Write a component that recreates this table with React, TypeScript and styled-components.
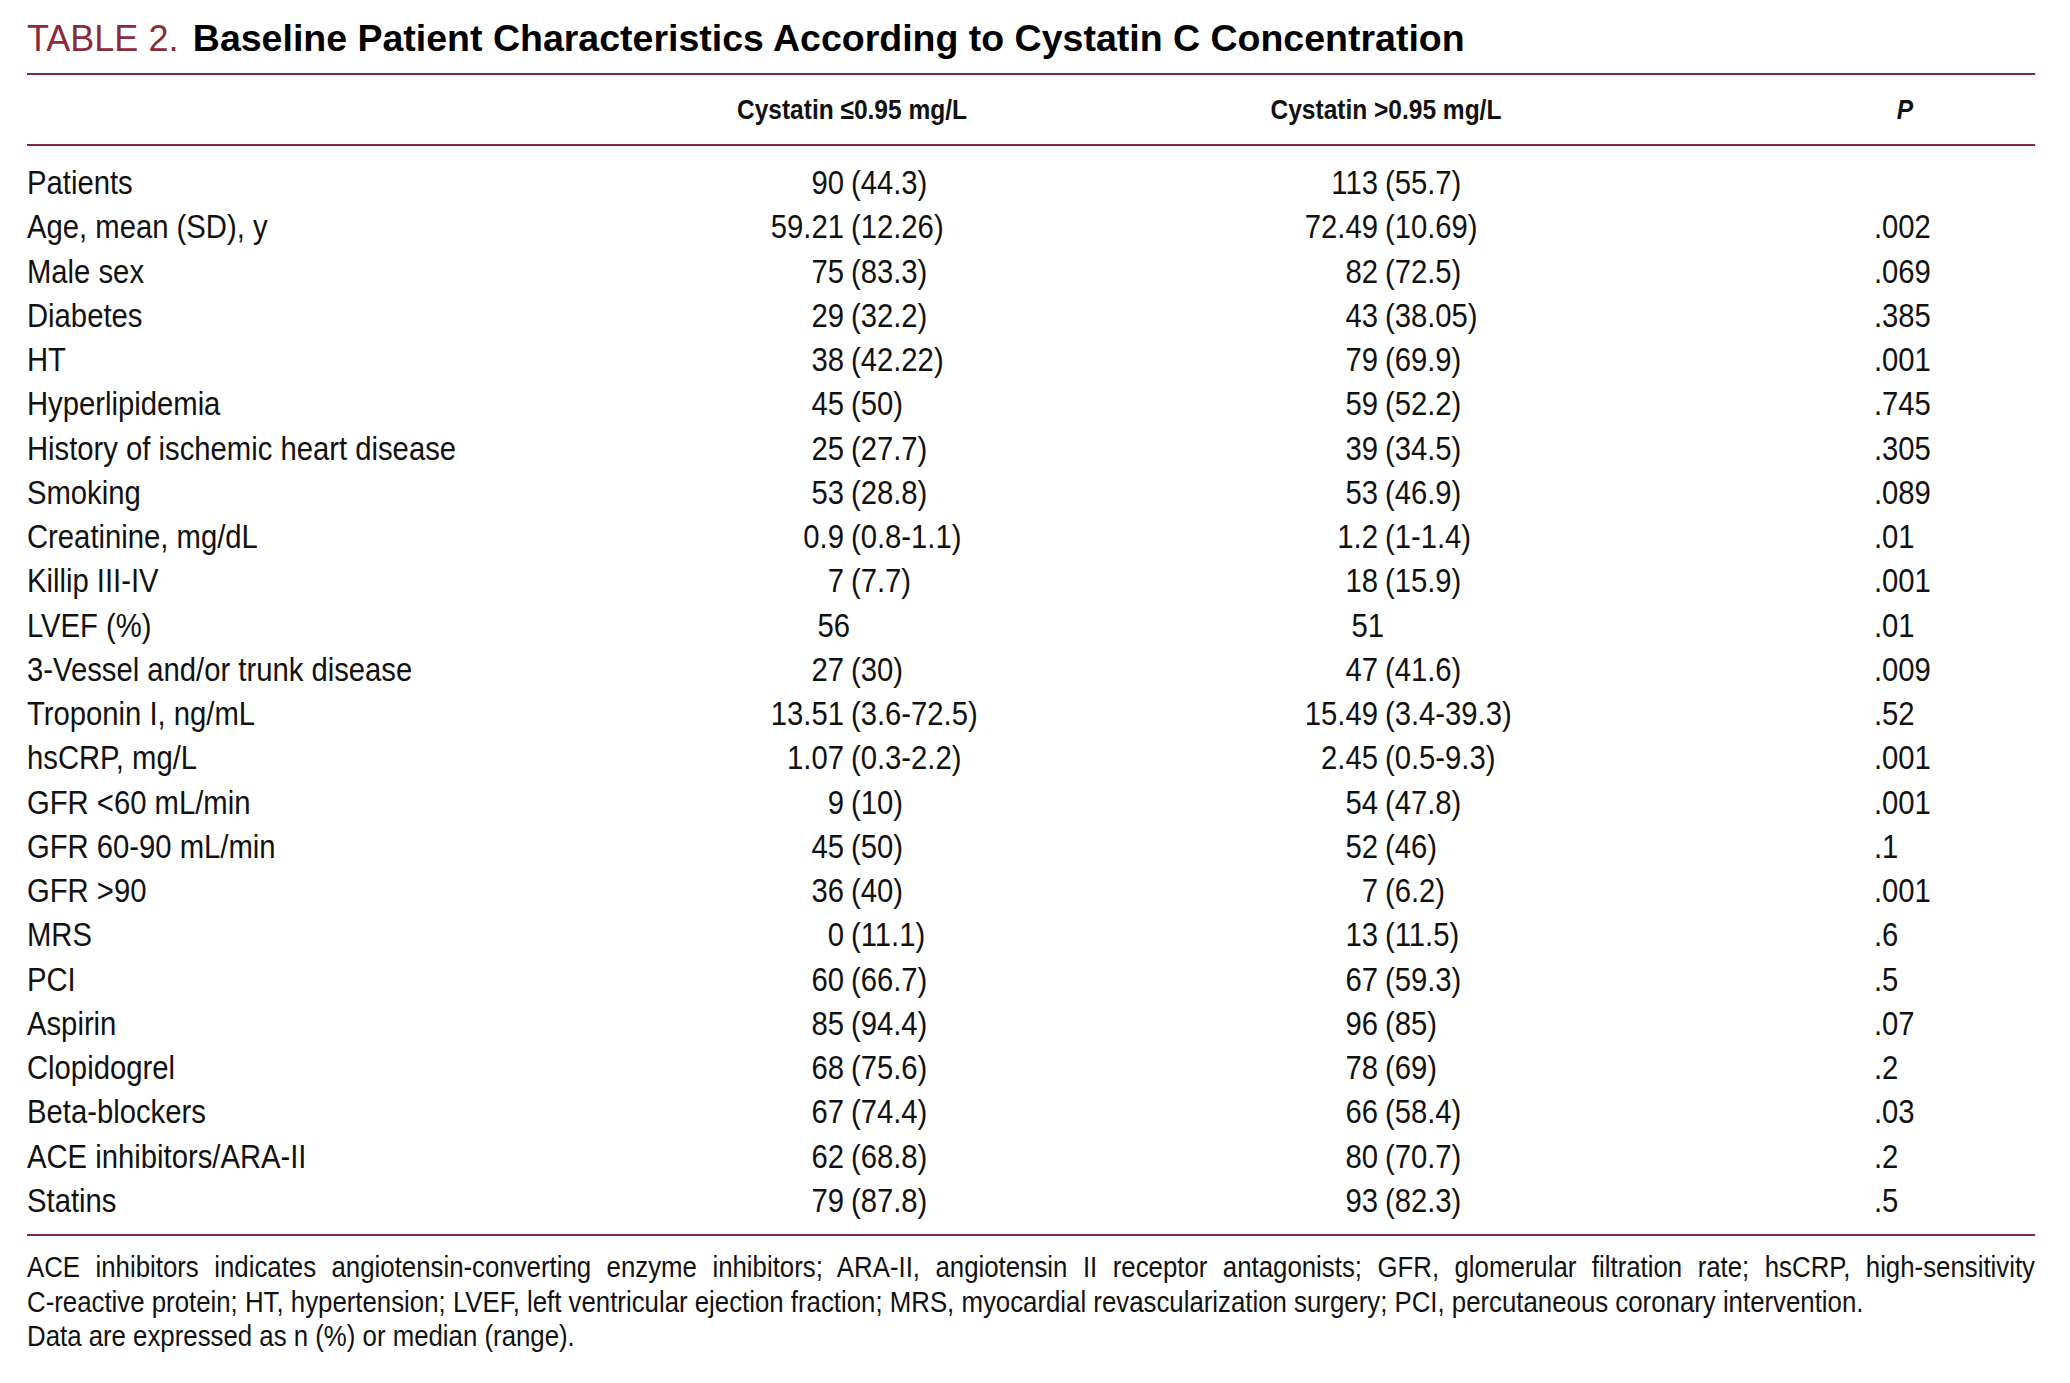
import React from "react";
import styled, { createGlobalStyle } from "styled-components";

const GlobalStyle = createGlobalStyle`
  html, body { margin: 0; padding: 0; background: #ffffff; overflow: hidden; }
  body { color: #111111; }
`;

/* The reference is set in a condensed grotesque; no condensed face is installed,
   so the table block is Liberation Sans condensed horizontally by one factor. */
const SQUEEZE = 0.86;
const px = (v: number) => `${(v / SQUEEZE).toFixed(2)}px`;

const FONT = `"Liberation Sans", Arial, Helvetica, sans-serif`;
const RULE = "#7d2b3b";
const COLS = [533, 284, 300, 234, 250, 246, 62, 99].map(px).join(" ");

const Page = styled.div`
  padding: 16px 0 0 27px;
  font-family: ${FONT};
`;

const Title = styled.h1`
  margin: 0 0 12px 0;
  font-size: 37.5px;
  line-height: 44px;
  font-weight: 700;
  color: #000000;
  white-space: nowrap;
`;

const TitleLabel = styled.span`
  font-size: 36px;
  font-weight: 400;
  color: #8a2a3c;
  margin-right: 4px;
`;

const Condensed = styled.div`
  width: ${px(2008)};
  transform: scaleX(${SQUEEZE});
  transform-origin: 0 0;
`;

const Rule = styled.div`
  height: 2px;
  background: ${RULE};
`;

const HeaderRow = styled.div`
  display: grid;
  grid-template-columns: ${COLS};
  height: 69px;
  align-items: center;
`;

const HeadCell = styled.div<{ $from: number; $to: number; $italic?: boolean }>`
  grid-column: ${(p) => p.$from} / ${(p) => p.$to};
  text-align: center;
  font-size: 28.5px;
  line-height: 69px;
  font-weight: 700;
  font-style: ${(p) => (p.$italic ? "italic" : "normal")};
  white-space: nowrap;
`;

const Body = styled.div`
  padding: 14px 0 12px 0;
`;

const Row = styled.div`
  display: grid;
  grid-template-columns: ${COLS};
  font-size: 34px;
  line-height: 44.25px;
  height: 44.25px;
  white-space: nowrap;
`;

const Label = styled.div``;

const Num = styled.div<{ $solo?: boolean }>`
  text-align: right;
  margin-right: ${(p) => (p.$solo ? px(-6) : "0")};
`;

const Paren = styled.div`
  text-align: left;
  padding-left: ${px(7)};
`;

const Spacer = styled.div``;

const PVal = styled.div`
  text-align: left;
`;

const Notes = styled.div`
  margin-top: 14px;
  font-size: 30px;
  line-height: 34.5px;
`;

const NoteJustified = styled.div`
  text-align: justify;
  text-align-last: justify;
  white-space: nowrap;
`;

const NoteLine = styled.div`
  text-align: left;
`;

type Value = [string, string?];

type DataRow = {
  label: string;
  a: Value;
  b: Value;
  p: string;
};

const rows: DataRow[] = [
  { label: "Patients", a: ["90", "(44.3)"], b: ["113", "(55.7)"], p: "" },
  { label: "Age, mean (SD), y", a: ["59.21", "(12.26)"], b: ["72.49", "(10.69)"], p: ".002" },
  { label: "Male sex", a: ["75", "(83.3)"], b: ["82", "(72.5)"], p: ".069" },
  { label: "Diabetes", a: ["29", "(32.2)"], b: ["43", "(38.05)"], p: ".385" },
  { label: "HT", a: ["38", "(42.22)"], b: ["79", "(69.9)"], p: ".001" },
  { label: "Hyperlipidemia", a: ["45", "(50)"], b: ["59", "(52.2)"], p: ".745" },
  { label: "History of ischemic heart disease", a: ["25", "(27.7)"], b: ["39", "(34.5)"], p: ".305" },
  { label: "Smoking", a: ["53", "(28.8)"], b: ["53", "(46.9)"], p: ".089" },
  { label: "Creatinine, mg/dL", a: ["0.9", "(0.8-1.1)"], b: ["1.2", "(1-1.4)"], p: ".01" },
  { label: "Killip III-IV", a: ["7", "(7.7)"], b: ["18", "(15.9)"], p: ".001" },
  { label: "LVEF (%)", a: ["56"], b: ["51"], p: ".01" },
  { label: "3-Vessel and/or trunk disease", a: ["27", "(30)"], b: ["47", "(41.6)"], p: ".009" },
  { label: "Troponin I, ng/mL", a: ["13.51", "(3.6-72.5)"], b: ["15.49", "(3.4-39.3)"], p: ".52" },
  { label: "hsCRP, mg/L", a: ["1.07", "(0.3-2.2)"], b: ["2.45", "(0.5-9.3)"], p: ".001" },
  { label: "GFR <60 mL/min", a: ["9", "(10)"], b: ["54", "(47.8)"], p: ".001" },
  { label: "GFR 60-90 mL/min", a: ["45", "(50)"], b: ["52", "(46)"], p: ".1" },
  { label: "GFR >90", a: ["36", "(40)"], b: ["7", "(6.2)"], p: ".001" },
  { label: "MRS", a: ["0", "(11.1)"], b: ["13", "(11.5)"], p: ".6" },
  { label: "PCI", a: ["60", "(66.7)"], b: ["67", "(59.3)"], p: ".5" },
  { label: "Aspirin", a: ["85", "(94.4)"], b: ["96", "(85)"], p: ".07" },
  { label: "Clopidogrel", a: ["68", "(75.6)"], b: ["78", "(69)"], p: ".2" },
  { label: "Beta-blockers", a: ["67", "(74.4)"], b: ["66", "(58.4)"], p: ".03" },
  { label: "ACE inhibitors/ARA-II", a: ["62", "(68.8)"], b: ["80", "(70.7)"], p: ".2" },
  { label: "Statins", a: ["79", "(87.8)"], b: ["93", "(82.3)"], p: ".5" },
];

const ValueCells: React.FC<{ v: Value }> = ({ v }) => (
  <>
    <Num $solo={!v[1]}>{v[0]}</Num>
    <Paren>{v[1] ?? ""}</Paren>
  </>
);

export default function App() {
  return (
    <>
      <GlobalStyle />
      <Page>
        <Title>
          <TitleLabel>TABLE 2.</TitleLabel> Baseline Patient Characteristics According to Cystatin C Concentration
        </Title>
        <Condensed>
          <Rule />
          <HeaderRow>
            <HeadCell $from={2} $to={4}>Cystatin ≤0.95 mg/L</HeadCell>
            <HeadCell $from={4} $to={6}>Cystatin &gt;0.95 mg/L</HeadCell>
            <HeadCell $from={7} $to={8} $italic>P</HeadCell>
          </HeaderRow>
          <Rule />
          <Body>
            {rows.map((r) => (
              <Row key={r.label}>
                <Label>{r.label}</Label>
                <ValueCells v={r.a} />
                <ValueCells v={r.b} />
                <Spacer />
                <PVal>{r.p}</PVal>
              </Row>
            ))}
          </Body>
          <Rule />
          <Notes>
            <NoteJustified>
              ACE inhibitors indicates angiotensin-converting enzyme inhibitors; ARA-II, angiotensin II receptor antagonists; GFR, glomerular filtration rate; hsCRP, high-sensitivity
            </NoteJustified>
            <NoteLine>
              C-reactive protein; HT, hypertension; LVEF, left ventricular ejection fraction; MRS, myocardial revascularization surgery; PCI, percutaneous coronary intervention.
            </NoteLine>
            <NoteLine>Data are expressed as n (%) or median (range).</NoteLine>
          </Notes>
        </Condensed>
      </Page>
    </>
  );
}
